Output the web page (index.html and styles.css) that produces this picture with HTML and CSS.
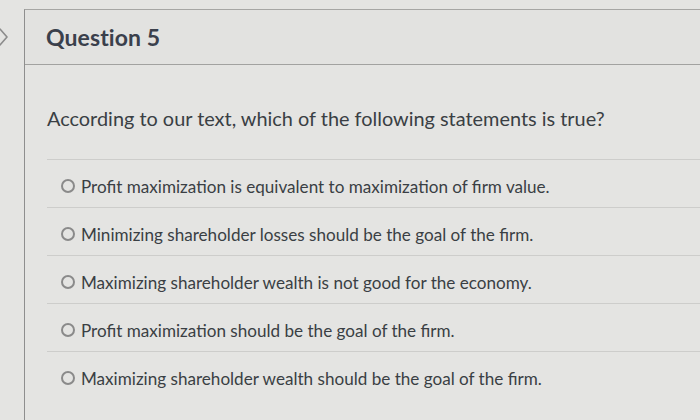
FILE: index.html
```html
<!DOCTYPE html>
<html lang="en">

<head>
    <meta charset="UTF-8">
    <meta name="viewport" content="width=device-width, initial-scale=1.0">
    <title>Question 5</title>
    <link rel="stylesheet" href="styles.css">
</head>

<body>
    <div class="page">
        <!-- 折叠箭头 -->
        <div class="side">
            <svg class="chevron" width="10" height="20" viewBox="0 0 10 20">
                <path d="M1 2 L8 10 L1 18" fill="none" stroke="#8c8c8c" stroke-width="1.6" stroke-linecap="round" stroke-linejoin="round"/>
            </svg>
        </div>

        <!-- 题目卡片 -->
        <div class="question-card">
            <div class="question-header">
                <h2 class="question-title">Question 5</h2>
            </div>

            <div class="question-body">
                <p class="question-text">According to our text, which of the following statements is true?</p>

                <div class="answers">
                    <label class="answer">
                        <input type="radio" name="q5" value="a">
                        <span class="radio-mark"></span>
                        <span class="answer-text">Profit maximization is equivalent to maximization of firm value.</span>
                    </label>
                    <label class="answer">
                        <input type="radio" name="q5" value="b">
                        <span class="radio-mark"></span>
                        <span class="answer-text">Minimizing shareholder losses should be the goal of the firm.</span>
                    </label>
                    <label class="answer">
                        <input type="radio" name="q5" value="c">
                        <span class="radio-mark"></span>
                        <span class="answer-text">Maximizing shareholder wealth is not good for the economy.</span>
                    </label>
                    <label class="answer">
                        <input type="radio" name="q5" value="d">
                        <span class="radio-mark"></span>
                        <span class="answer-text">Profit maximization should be the goal of the firm.</span>
                    </label>
                    <label class="answer">
                        <input type="radio" name="q5" value="e">
                        <span class="radio-mark"></span>
                        <span class="answer-text">Maximizing shareholder wealth should be the goal of the firm.</span>
                    </label>
                </div>
            </div>
        </div>
    </div>
</body>

</html>
```

FILE: styles.css
```css
:root {
    --page-bg: #e4e4e2;
    --text-dark: #3a3f44;
    --title-color: #3a404c;
    --card-border: #8e8e8e;
    --row-border: #cdcdcb;
    --radio-color: #8a8a8a;
}

* {
    margin: 0;
    padding: 0;
    box-sizing: border-box;
    font-family: 'Lato', 'Open Sans', sans-serif;
}

body {
    background: var(--page-bg);
    height: 420px;
    overflow: hidden;
}

.page {
    display: flex;
    height: 100%;
    padding-top: 9px;
}

/* 左侧箭头 */
.side {
    width: 24px;
    flex-shrink: 0;
    padding-top: 18px;
}

.chevron {
    display: block;
    margin-left: -1px;
}

/* 题目卡片 */
.question-card {
    flex: 1;
    border-left: 1px solid var(--card-border);
    border-top: 1px solid #a6a6a4;
}

.question-header {
    height: 55px;
    padding-left: 21px;
    display: flex;
    align-items: center;
    border-bottom: 1px solid #a2a2a0;
    background: #e2e2e0;
}

.question-title {
    font-size: 23px;
    font-weight: 700;
    color: var(--title-color);
    letter-spacing: 0.1px;
}

.question-body {
    padding: 40px 0 0 22px;
}

.question-text {
    font-size: 19.9px;
    line-height: 26px;
    color: var(--text-dark);
    margin-bottom: 28px;
}

.answer {
    display: flex;
    align-items: center;
    gap: 6px;
    height: 48px;
    padding: 5px 0 0 14px;
    border-top: 1px solid var(--row-border);
    cursor: pointer;
}

.answer input {
    display: none;
}

.radio-mark {
    width: 14px;
    height: 14px;
    border: 2.5px solid var(--radio-color);
    border-radius: 50%;
    flex-shrink: 0;
}

.answer-text {
    font-size: 17.1px;
    color: var(--text-dark);
}
```
